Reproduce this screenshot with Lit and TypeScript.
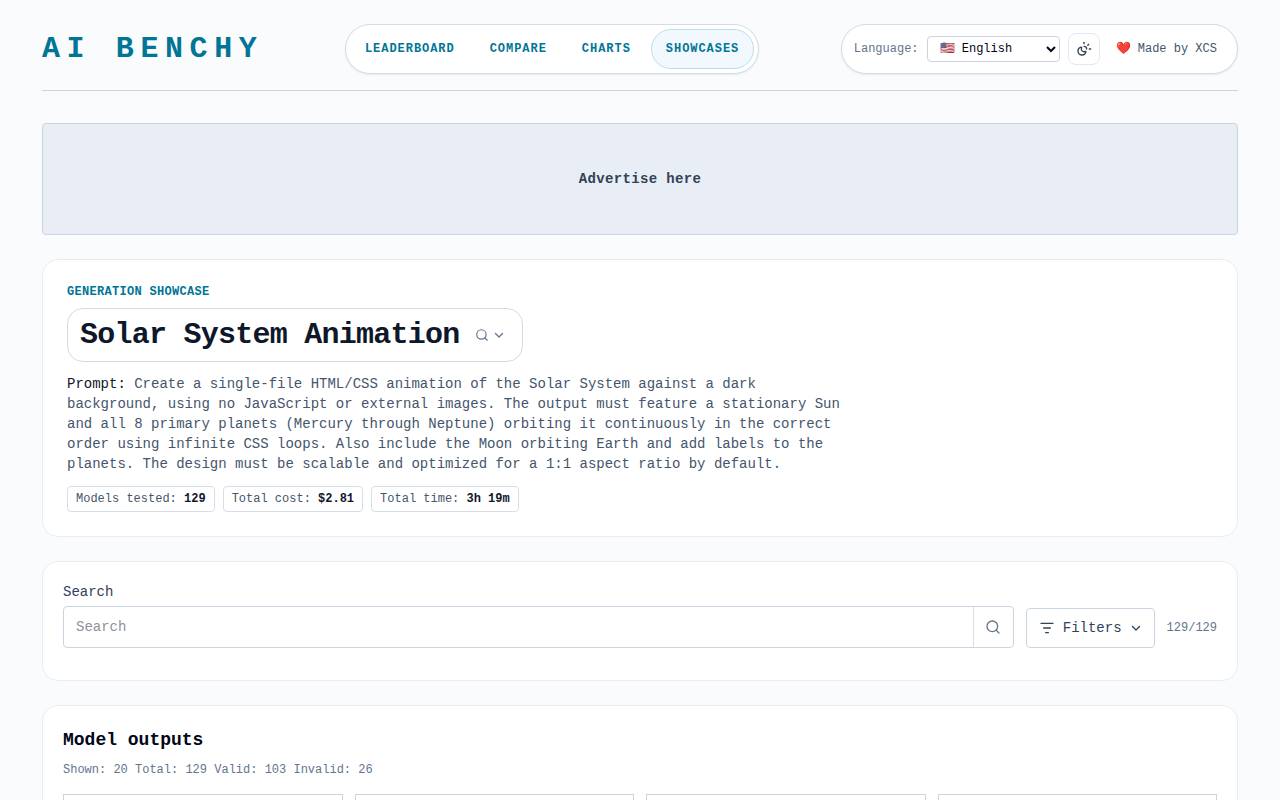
import { LitElement, html, css, svg } from "lit";
import { customElement, state } from "lit/decorators.js";

const icons = {
  search: svg`<circle cx="11" cy="11" r="8"/><path d="m21 21-4.3-4.3"/>`,
  chevron: svg`<path stroke-width="2.6" d="m5 9 7 7 7-7"/>`,
  filter: svg`<path d="M3 5h18"/><path d="M7 12h10"/><path d="M10 19h4"/>`,
  sunMoon: svg`<path d="M12 2v2"/><path d="M14.837 16.385a6 6 0 1 1-7.223-7.222c.624-.147.97.66.715 1.248a4 4 0 0 0 5.26 5.259c.589-.255 1.396.09 1.248.715"/><path d="M16 12a4 4 0 0 0-4-4"/><path d="m19 5-1.256 1.256"/><path d="M20 12h2"/>`,
};

const icon = (name: keyof typeof icons, size = 16) => html`<svg
  class="icon" width=${size} height=${size} viewBox="0 0 24 24" aria-hidden="true">${icons[name]}</svg>`;

@customElement("app-root")
export class AppRoot extends LitElement {
  @state() private query = "";

  private nav = ["Leaderboard", "Compare", "Charts", "Showcases"];
  private stats = [
    ["Models tested:", "129"],
    ["Total cost:", "$2.81"],
    ["Total time:", "3h 19m"],
  ];

  static styles = css`
    :host {
      display: block;
      box-sizing: border-box;
      min-height: 100vh;
      padding: 24px 42px;
      background: #f9fbfd;
      color: #020617;
      font-family: "Liberation Mono", "DejaVu Sans Mono", monospace;
      font-size: 14px;
      line-height: 20px;
    }
    *, *::before, *::after { box-sizing: border-box; }
    h1, h2, p { margin: 0; }
    a { color: inherit; text-decoration: none; }
    button, input, select { font: inherit; color: inherit; margin: 0; }
    button { cursor: pointer; }
    .icon {
      display: block;
      flex: none;
      fill: none;
      stroke: currentColor;
      stroke-width: 2;
      stroke-linecap: round;
      stroke-linejoin: round;
    }
    .header {
      display: flex;
      align-items: center;
      justify-content: space-between;
      padding-bottom: 16px;
      border-bottom: 1px solid #cbd5e1;
    }
    .logo {
      font-size: 30px;
      line-height: 36px;
      font-weight: 700;
      letter-spacing: 0.22em;
      color: #007595;
    }
    .capsule {
      display: flex;
      align-items: center;
      height: 50px;
      border: 1px solid #d5dbe5;
      border-radius: 25px;
      background: #fff;
      box-shadow: 0 1px 2px rgba(15, 23, 42, 0.08);
    }
    .nav { gap: 5px; padding: 4px; }
    .nav-link {
      height: 40px;
      padding: 10px 14px;
      border: 1px solid transparent;
      border-radius: 20px;
      font-size: 12px;
      line-height: 18px;
      font-weight: 700;
      letter-spacing: 0.08em;
      text-transform: uppercase;
      color: #007595;
    }
    .nav-link.active { border-color: #b8dfee; background: #f2f9fe; }
    .tools {
      gap: 8px;
      padding: 0 12px;
      font-size: 12px;
      line-height: 16px;
      color: #64748b;
    }
    .language {
      width: 133px;
      height: 26px;
      padding: 0 8px;
      border: 1px solid #cbd5e1;
      border-radius: 4px;
      background: #fff;
      color: #020617;
    }
    .theme {
      display: grid;
      place-items: center;
      width: 32px;
      height: 32px;
      padding: 0;
      border: 1px solid #e2e8f0;
      border-radius: 8px;
      background: #fff;
      color: #334155;
    }
    .credit { padding: 0 8px; color: #45556c; }
    .ad {
      display: flex;
      align-items: center;
      justify-content: center;
      height: 112px;
      margin: 32px 0 24px;
      border: 1px solid #cbd5e1;
      border-radius: 4px;
      background: #e9edf5;
      font-weight: 700;
      letter-spacing: 0.025em;
      color: #314158;
    }
    .card {
      margin-bottom: 24px;
      padding: 20px;
      border: 1px solid #e8ecf1;
      border-radius: 16px;
      background: #fff;
    }
    .hero { padding: 24px; }
    .eyebrow {
      margin-bottom: 8px;
      font-size: 12px;
      line-height: 16px;
      font-weight: 700;
      letter-spacing: 0.025em;
      text-transform: uppercase;
      color: #007595;
    }
    .title { display: flex; }
    .picker {
      display: flex;
      align-items: center;
      gap: 15px;
      padding: 8px 17px 8px 12px;
      border: 1px solid #d5dae2;
      border-radius: 16px;
      background: #fff;
      color: #0f172b;
      font-size: 30px;
      line-height: 36px;
      font-weight: 700;
      letter-spacing: -0.025em;
    }
    .picker-icons {
      display: flex;
      align-items: center;
      gap: 4px;
      color: #62748e;
    }
    .prompt { max-width: 778px; margin: 12px 0; color: #45556c; }
    .prompt-label { color: #0f172b; }
    .stats { display: flex; flex-wrap: wrap; gap: 8px; }
    .stat {
      padding: 4px 8px;
      border: 1px solid #d8dee7;
      border-radius: 4px;
      font-size: 12px;
      line-height: 16px;
      color: #45556c;
    }
    .stat-value { font-weight: 700; color: #0f172b; }
    .search-card { padding-bottom: 32px; }
    .search-row { display: flex; align-items: flex-end; gap: 12px; }
    .field { flex: 1; min-width: 0; display: grid; gap: 4px; color: #314158; }
    .search-box {
      display: flex;
      height: 42px;
      border: 1px solid #cbd5e1;
      border-radius: 4px;
      background: #fff;
      overflow: hidden;
    }
    .search-input {
      flex: 1;
      min-width: 0;
      padding: 0 12px;
      border: 0;
      outline: 0;
      background: none;
      color: #0f172b;
    }
    .search-input::placeholder { color: #8e9299; }
    .search-button {
      display: grid;
      place-items: center;
      width: 40px;
      padding: 0;
      border: 0;
      border-left: 1px solid #d8dee7;
      background: none;
      color: #62748e;
    }
    .filters {
      display: flex;
      align-items: center;
      gap: 8px;
      height: 40px;
      padding: 0 12px;
      border: 1px solid #cbd5e1;
      border-radius: 4px;
      background: #fff;
      color: #314158;
    }
    .count { height: 40px; font-size: 12px; line-height: 40px; color: #62748e; }
    .outputs-title { font-size: 18px; line-height: 28px; }
    .summary {
      margin: 8px 0 16px;
      font-size: 12px;
      line-height: 16px;
      color: #62748e;
    }
    .grid { display: grid; grid-template-columns: repeat(4, 1fr); gap: 12px; }
    .tile { aspect-ratio: 1; border: 1px solid #cbd5e1; background: #fff; }
  `;

  render() {
    return html`
      <header class="header">
        <a class="logo" href="#">AI BENCHY</a>
        <nav class="capsule nav" aria-label="Main">
          ${this.nav.map(
            (label) => html`<a class="nav-link ${label === "Showcases" ? "active" : ""}" href="#">${label}</a>`
          )}
        </nav>
        <div class="capsule tools">
          <label for="language">Language:</label>
          <select id="language" class="language">
            <option>🇺🇸 English</option>
          </select>
          <button class="theme" type="button" aria-label="Toggle theme">${icon("sunMoon")}</button>
          <a class="credit" href="#">❤️ Made by XCS</a>
        </div>
      </header>
      <main>
        <a class="ad" href="#">Advertise here</a>
        <section class="card hero">
          <p class="eyebrow">Generation showcase</p>
          <h1 class="title">
            <button class="picker" type="button">
              <span>Solar System Animation</span>
              <span class="picker-icons">${icon("search", 14)}${icon("chevron", 12)}</span>
            </button>
          </h1>
          <p class="prompt"><span class="prompt-label">Prompt:</span> Create a single-file HTML/CSS animation of the Solar System against a dark background, using no JavaScript or external images. The output must feature a stationary Sun and all 8 primary planets (Mercury through Neptune) orbiting it continuously in the correct order using infinite CSS loops. Also include the Moon orbiting Earth and add labels to the planets. The design must be scalable and optimized for a 1:1 aspect ratio by default.</p>
          <div class="stats">
            ${this.stats.map(([k, v]) => html`<span class="stat">${k} <span class="stat-value">${v}</span></span>`)}
          </div>
        </section>
        <section class="card search-card">
          <div class="search-row">
            <div class="field">
              <label for="search">Search</label>
              <div class="search-box">
                <input id="search" class="search-input" type="text" placeholder="Search" .value=${this.query}
                  @input=${(e: Event) => (this.query = (e.target as HTMLInputElement).value)} />
                <button class="search-button" type="button" aria-label="Search">${icon("search")}</button>
              </div>
            </div>
            <button class="filters" type="button">${icon("filter")}<span>Filters</span>${icon("chevron", 12)}</button>
            <span class="count">129/129</span>
          </div>
        </section>
        <section class="card">
          <h2 class="outputs-title">Model outputs</h2>
          <p class="summary">Shown: 20 Total: 129 Valid: 103 Invalid: 26</p>
          <div class="grid">
            ${[0, 1, 2, 3].map(() => html`<article class="tile"></article>`)}
          </div>
        </section>
      </main>
    `;
  }
}
